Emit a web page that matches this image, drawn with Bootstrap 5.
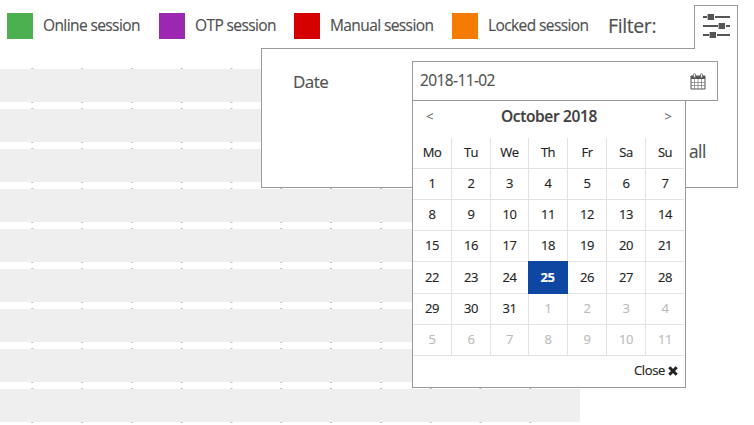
<!DOCTYPE html>
<html lang="en">
<head>
<meta charset="utf-8">
<title>Sessions</title>
<link href="https://cdn.jsdelivr.net/npm/bootstrap@5.3.0/dist/css/bootstrap.min.css" rel="stylesheet">
<style>
body{font-family:"Open Sans","Noto Sans",sans-serif;width:754px;height:425px;color:#505050;background:#fff;font-size:15.5px;-webkit-text-stroke:.15px}
.legend{height:52px;padding-left:7px}
.legend-item{gap:10px;letter-spacing:-.6px}
.filter-label{font-size:19.5px;letter-spacing:-.4px}
.swatch{width:26px;height:26px}
.timeline{padding-top:16px}
.slot{width:580px;height:35px;margin-bottom:5px;flex:none}
.ticks{width:570px;height:1px;background:linear-gradient(90deg,#bbb 1.6px,transparent 1.6px) 31.3px 0/49.8px 1px repeat-x}
.band{height:33px;background:#efefef}
.panel{left:261px;top:48px;width:477px;height:140px;border:1px solid #999;background:#fff}
.tab{left:432px;top:-44px;width:44px;height:44px;border:1px solid #999;border-bottom:0;background:#fff}
.panel-label{padding:20px 0 0 31px;font-size:17px;letter-spacing:-.5px}
.picker{left:150px;top:12px;width:306px}
.date-field{height:40px;border:1px solid #999;padding:0 11px 0 7px;background:#fff;letter-spacing:-.6px}
.calendar{width:274px;height:287px;border:1px solid #999;border-top:0;background:#fff;color:#222;font-size:13px}
.cal-head{height:37px;padding:0 13px 6px;color:#666}
.cal-title{font-size:15.5px;font-weight:600;letter-spacing:-.35px;color:#404040}
.days{display:grid;grid-template-columns:39px 39px 38px 39px 39px 39px 38px;grid-template-rows:31px 31px 31px 31px 32px 31px 31px}
.days>div{border-right:1px solid #e2e2e2;border-bottom:1px solid #e2e2e2;display:flex;align-items:center;justify-content:center;letter-spacing:-.5px}
.days>div:nth-child(7n){border-right:0}
.days>.off{color:#bbb}
.days>.picked{background:#0d47a1;color:#fff;font-weight:700;border-color:#0d47a1;margin:-1px 0 0 -1px;padding-top:1px}
.all-link{left:427px;top:90px;font-size:17.3px;letter-spacing:-.5px}
.cal-foot{height:30px;padding-right:7px;gap:3px;letter-spacing:-.35px}
</style>
</head>
<body class="position-relative overflow-hidden">
<header class="legend d-flex align-items-center">
<div class="legend-item d-flex align-items-center" style="width:152px"><span class="swatch" style="background:#4caf50"></span><span>Online session</span></div>
<div class="legend-item d-flex align-items-center" style="width:135px"><span class="swatch" style="background:#9c27b0"></span><span>OTP session</span></div>
<div class="legend-item d-flex align-items-center" style="width:158px"><span class="swatch" style="background:#d50000"></span><span>Manual session</span></div>
<div class="legend-item d-flex align-items-center" style="width:156px"><span class="swatch" style="background:#f57c00"></span><span>Locked session</span></div>
<div class="filter-label">Filter:</div>
</header>
<main class="timeline d-flex flex-column">
<div class="slot"><div class="ticks"></div><div class="band"></div><div class="ticks"></div></div>
<div class="slot"><div class="ticks"></div><div class="band"></div><div class="ticks"></div></div>
<div class="slot"><div class="ticks"></div><div class="band"></div><div class="ticks"></div></div>
<div class="slot"><div class="ticks"></div><div class="band"></div><div class="ticks"></div></div>
<div class="slot"><div class="ticks"></div><div class="band"></div><div class="ticks"></div></div>
<div class="slot"><div class="ticks"></div><div class="band"></div><div class="ticks"></div></div>
<div class="slot"><div class="ticks"></div><div class="band"></div><div class="ticks"></div></div>
<div class="slot"><div class="ticks"></div><div class="band"></div><div class="ticks"></div></div>
<div class="slot"><div class="ticks"></div><div class="band"></div><div class="ticks"></div></div>
</main>
<section class="panel position-absolute">
<div class="tab position-absolute"><svg class="d-block" width="42" height="43" viewBox="0 0 42 43"><path d="M8 11H35M8 20H35M8 29H35" stroke="#555" stroke-width="2"/><path d="M12 8h8v6h-8zM23 17h8v6h-8zM14 26h8v6h-8z" fill="#fff"/><path d="M12.6 8h6.4v6h-6.4zM23.6 17h6.4v6h-6.4zM14.6 26h6.4v6h-6.4z" fill="#555"/></svg></div>
<div class="panel-label">Date</div>
<div class="all-link position-absolute">all</div>
<div class="picker position-absolute">
<div class="date-field d-flex align-items-center justify-content-between"><span>2018-11-02</span>
<svg width="16" height="17" viewBox="0 0 16 17"><path d="M1 3h14v13H1z" fill="#fff" stroke="#555"/><path d="M1 3h14v3H1z" fill="#555"/><path d="M1 9.5h14M1 12.5h14M4.5 6v10M8 6v10M11.5 6v10" stroke="#777" stroke-width=".7"/><rect x="3.5" y=".7" width="2" height="4" rx="1" fill="#fff" stroke="#555" stroke-width=".8"/><rect x="10.5" y=".7" width="2" height="4" rx="1" fill="#fff" stroke="#555" stroke-width=".8"/></svg></div>
<div class="calendar">
<div class="cal-head d-flex align-items-center justify-content-between"><span>&lt;</span><b class="cal-title">October 2018</b><span>&gt;</span></div>
<div class="days">
<div>Mo</div><div>Tu</div><div>We</div><div>Th</div><div>Fr</div><div>Sa</div><div>Su</div>
<div>1</div><div>2</div><div>3</div><div>4</div><div>5</div><div>6</div><div>7</div>
<div>8</div><div>9</div><div>10</div><div>11</div><div>12</div><div>13</div><div>14</div>
<div>15</div><div>16</div><div>17</div><div>18</div><div>19</div><div>20</div><div>21</div>
<div>22</div><div>23</div><div>24</div><div class="picked">25</div><div>26</div><div>27</div><div>28</div>
<div>29</div><div>30</div><div>31</div><div class="off">1</div><div class="off">2</div><div class="off">3</div><div class="off">4</div>
<div class="off">5</div><div class="off">6</div><div class="off">7</div><div class="off">8</div><div class="off">9</div><div class="off">10</div><div class="off">11</div>
</div>
<div class="cal-foot d-flex align-items-center justify-content-end">Close <svg width="10" height="10" viewBox="0 0 10 10"><path d="M1.3 1.3L8.7 8.7M8.7 1.3L1.3 8.7" stroke="#222" stroke-width="3"/></svg></div>
</div>
</div>
</section>
<script src="https://cdn.jsdelivr.net/npm/bootstrap@5.3.0/dist/js/bootstrap.bundle.min.js"></script>
</body>
</html>
